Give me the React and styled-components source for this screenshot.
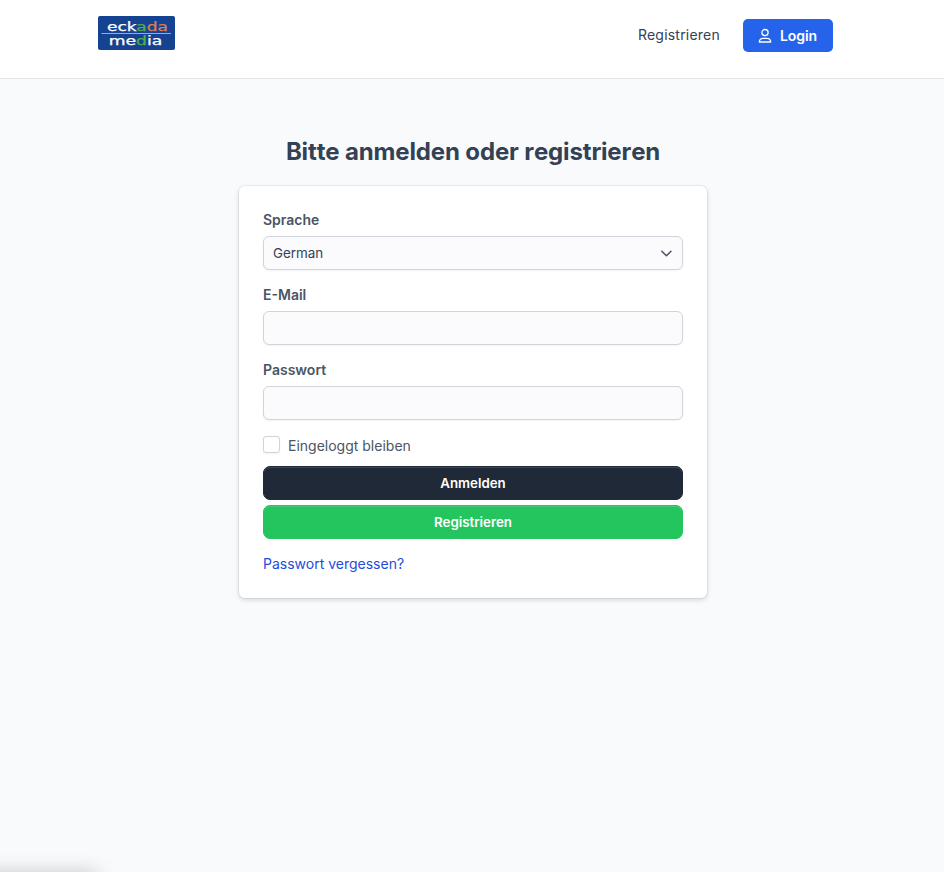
import React, { useState } from 'react';
import styled, { createGlobalStyle } from 'styled-components';

const GlobalStyle = createGlobalStyle`
  *, *::before, *::after {
    box-sizing: border-box;
  }

  body {
    margin: 0;
    background: #f8fafc;
    color: #334155;
    font-family: Inter, "Liberation Sans", sans-serif;
    font-size: 14px;
    line-height: 20px;
  }

  a {
    text-decoration: none;
  }
`;

const Page = styled.div`
  height: 100vh;
  display: flex;
  flex-direction: column;
  overflow: hidden;
`;

const Header = styled.header`
  flex: none;
  height: 79px;
  padding: 16px 111px 0 98px;
  display: flex;
  justify-content: space-between;
  align-items: flex-start;
  background: #fff;
  border-bottom: 1px solid #e2e4e9;
`;

const Logo = styled.svg`
  display: block;
  width: 77px;
  height: 34px;
`;

const Nav = styled.nav`
  display: flex;
  align-items: center;
  gap: 23px;
  padding-top: 3px;
`;

const NavLink = styled.a`
  padding-bottom: 2px;
  color: #334155;
  font-size: 14px;
  letter-spacing: 0.22px;
`;

const LoginButton = styled.a`
  width: 90px;
  height: 33px;
  padding-left: 15px;
  display: flex;
  align-items: center;
  gap: 8px;
  border-radius: 5px;
  background: #2563eb;
  color: #fff;
  font-weight: 600;
  letter-spacing: -0.1px;
`;

const Main = styled.main`
  padding: 57px 0 0 2px;
  display: flex;
  flex-direction: column;
  align-items: center;
`;

const Title = styled.h1`
  margin: 0 0 18px;
  color: #334155;
  font-size: 24px;
  font-weight: 700;
  font-kerning: none;
  letter-spacing: -0.14px;
  line-height: 32px;
`;

const Card = styled.form`
  width: 468px;
  padding: 24px;
  display: flex;
  flex-direction: column;
  border-radius: 6px;
  background: #fff;
  box-shadow: 0 0 0 1px rgba(15, 23, 42, 0.05), 0 2px 5px rgba(15, 23, 42, 0.15);
`;

const Field = styled.div`
  margin-bottom: 15px;
  display: flex;
  flex-direction: column;
  gap: 6px;
`;

const Label = styled.label`
  align-self: flex-start;
  color: #4b5563;
  font-weight: 600;
`;

const Input = styled.input`
  width: 100%;
  height: 34px;
  padding: 0 9px;
  border: 1px solid #d1d3da;
  border-radius: 6px;
  outline: none;
  background: #fbfbfd;
  box-shadow: 0 1px 2px rgba(15, 23, 42, 0.05);
  color: #334155;
  font: inherit;
`;

const SelectBox = styled.div`
  height: 34px;
  padding: 0 10px 0 9px;
  display: flex;
  align-items: center;
  justify-content: space-between;
  border: 1px solid #d1d3da;
  border-radius: 6px;
  background: #fbfbfd;
  box-shadow: 0 1px 2px rgba(15, 23, 42, 0.05);
  color: #334155;
  font-size: 13.4px;
`;

const Remember = styled.label`
  height: 20px;
  margin: 1px 0 10px;
  display: flex;
  align-items: center;
  gap: 8px;
  color: #4b5563;
`;

const Checkbox = styled.input`
  appearance: none;
  width: 17px;
  height: 17px;
  margin: 0 0 3px;
  border: 1px solid #d1d3da;
  border-radius: 3px;
  background: ${props => (props.checked ? '#2563eb' : '#fff')};
  box-shadow: 0 1px 2px rgba(15, 23, 42, 0.05);
`;

const Button = styled.button`
  height: 34px;
  margin: 0 0 ${props => props.$gap}px;
  padding: 0;
  border: 1px solid ${props => props.$color};
  border-radius: 7px;
  background: ${props => props.$color};
  box-shadow: inset 0 1px 0 rgba(255, 255, 255, 0.14);
  color: #fff;
  font: inherit;
  font-size: 13.3px;
  font-weight: 600;
`;

const ForgotLink = styled.a`
  align-self: flex-start;
  color: #1d4ed8;
`;

// Browser status bubble sits just under the window edge, only its shadow shows
const StatusShadow = styled.div`
  position: fixed;
  left: -20px;
  top: 100%;
  width: 118px;
  height: 20px;
  box-shadow: 0 1px 20px 0 rgba(0, 0, 0, 0.22);
`;

function App() {
  const [email, setEmail] = useState('');
  const [password, setPassword] = useState('');
  const [remember, setRemember] = useState(false);

  return (
    <Page>
      <GlobalStyle />
      <Header>
        <Logo viewBox="0 0 77 34" role="img" aria-label="eckada media">
          <rect width="77" height="34" rx="2" fill="#164391" />
          <path d="M3.5 17.5H73" stroke="#a3b8d8" strokeWidth="0.9" />
          <g fontFamily="DejaVu Sans, sans-serif" fontSize="12.2" fill="#fff" stroke="#fff" strokeWidth="0.25">
            <text x="9" y="14.7" textLength="61" lengthAdjust="spacingAndGlyphs">
              eck<tspan fill="#4fae4a" stroke="#4fae4a">a</tspan><tspan fill="#dd7f50" stroke="#dd7f50">da</tspan>
            </text>
            <text x="10.8" y="28.9" textLength="53.6" lengthAdjust="spacingAndGlyphs">
              me<tspan fill="#4fae4a" stroke="#4fae4a">d</tspan>ia
            </text>
          </g>
        </Logo>
        <Nav>
          <NavLink href="#">Registrieren</NavLink>
          <LoginButton href="#">
            <svg width="14" height="16" viewBox="0 0 14 16" fill="none" stroke="#fff" strokeWidth="1.3">
              <circle cx="7" cy="4.6" r="3.1" />
              <path d="M1.3 14C1.3 11.7 3 10.3 5.2 10.3H8.8C11 10.3 12.7 11.7 12.7 14Z" strokeLinejoin="round" />
            </svg>
            Login
          </LoginButton>
        </Nav>
      </Header>

      <Main>
        <Title>Bitte anmelden oder registrieren</Title>
        <Card onSubmit={e => e.preventDefault()}>
          <Field>
            <Label>Sprache</Label>
            <SelectBox>
              German
              <svg width="12" height="8" viewBox="0 0 12 8" fill="none" stroke="#4b5563" strokeWidth="1.5">
                <path d="M1.8 2.2L6.4 6.8L11 2.2" strokeLinecap="round" strokeLinejoin="round" />
              </svg>
            </SelectBox>
          </Field>
          <Field>
            <Label htmlFor="email">E-Mail</Label>
            <Input id="email" type="email" value={email} onChange={e => setEmail(e.target.value)} />
          </Field>
          <Field>
            <Label htmlFor="password">Passwort</Label>
            <Input id="password" type="password" value={password} onChange={e => setPassword(e.target.value)} />
          </Field>
          <Remember>
            <Checkbox type="checkbox" checked={remember} onChange={e => setRemember(e.target.checked)} />
            Eingeloggt bleiben
          </Remember>
          <Button type="submit" $color="#1f2937" $gap={5}>Anmelden</Button>
          <Button type="button" $color="#24c55f" $gap={15}>Registrieren</Button>
          <ForgotLink href="#">Passwort vergessen?</ForgotLink>
        </Card>
      </Main>
      <StatusShadow />
    </Page>
  );
}

export default App;
